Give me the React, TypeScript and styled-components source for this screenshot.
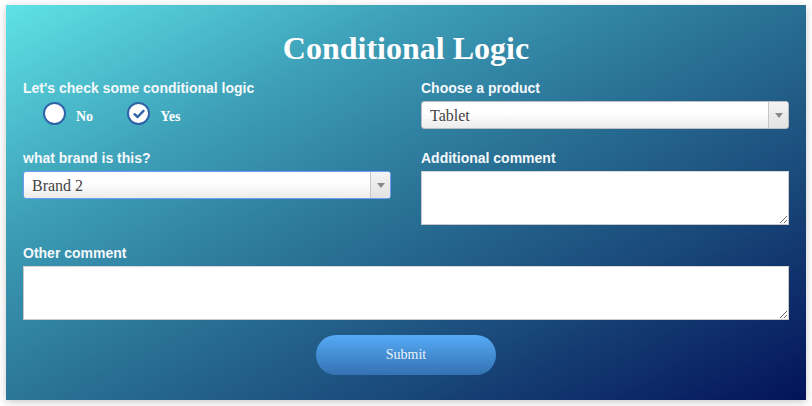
import React from "react";
import styled, { createGlobalStyle } from "styled-components";

const Global = createGlobalStyle`
  html, body { margin: 0; padding: 0; background: #ffffff; }
  body { font-family: "Liberation Sans", Arial, sans-serif; }
  * { box-sizing: border-box; }
`;

const Page = styled.div`
  padding: 5px 6px 6px 6px;
`;

const Panel = styled.form`
  width: 800px;
  height: 395px;
  padding: 23px 17px 0 17px;
  background: linear-gradient(152deg, #5ee2e6 0%, #3c9db6 28%, #2a7296 50%, #1a4a7a 72%, #03125a 100%);
  box-shadow: 0 2px 8px rgba(0, 0, 0, 0.22);
  display: flex;
  flex-direction: column;
`;

const Title = styled.h1`
  margin: 0;
  font-family: "Liberation Serif", "Times New Roman", serif;
  font-weight: bold;
  font-size: 32px;
  line-height: 40px;
  text-align: center;
  color: #ffffff;
`;

const Grid = styled.div`
  display: grid;
  grid-template-columns: 368px 368px;
  column-gap: 30px;
  margin-top: 12px;
`;

const Field = styled.div<{ $span?: boolean; $gap?: number }>`
  display: flex;
  flex-direction: column;
  grid-column: ${(p) => (p.$span ? "1 / span 2" : "auto")};
  margin-bottom: ${(p) => p.$gap ?? 0}px;
`;

const Label = styled.label`
  font-family: "Liberation Sans", Arial, sans-serif;
  font-weight: bold;
  font-size: 14px;
  line-height: 16px;
  color: #f4f8fb;
  margin-bottom: 5px;
`;

const RadioRow = styled.div`
  display: flex;
  align-items: center;
  padding-left: 20px;
  margin-top: 1px;
  gap: 34px;
`;

const RadioItem = styled.span`
  display: flex;
  align-items: center;
  gap: 10px;
  font-family: "Liberation Serif", "Times New Roman", serif;
  font-weight: bold;
  font-size: 14px;
  color: #ffffff;
  padding-top: 6px;
`;

const RadioCircle = styled.span`
  width: 23px;
  height: 23px;
  margin-top: -6px;
  border-radius: 50%;
  border: 2px solid #2f64a8;
  background: #ffffff;
  display: flex;
  align-items: center;
  justify-content: center;
`;

const Select = styled.div<{ $focus?: boolean }>`
  height: 28px;
  display: flex;
  border: 1px solid ${(p) => (p.$focus ? "#6d9cf0" : "#bdbdbd")};
  border-radius: 3px;
  background: linear-gradient(#ffffff 40%, #ececec 100%);
  overflow: hidden;
`;

const SelectText = styled.span`
  flex: 1;
  font-family: "Liberation Serif", "Times New Roman", serif;
  font-size: 16px;
  line-height: 28px;
  color: #444444;
  padding-left: 8px;
`;

const Arrow = styled.span`
  width: 20px;
  border-left: 1px solid #c6c6c6;
  background: linear-gradient(#f4f4f4, #e2e2e2);
  display: flex;
  align-items: center;
  justify-content: center;
  &::after {
    content: "";
    border-left: 4px solid transparent;
    border-right: 4px solid transparent;
    border-top: 5px solid #888888;
  }
`;

const TextArea = styled.textarea`
  height: 54px;
  width: 100%;
  border: 1px solid #c8c8c8;
  border-top-color: #d8d8d8;
  background: #ffffff;
  margin: 0;
  display: block;
  resize: vertical;
`;

const ButtonRow = styled.div`
  display: flex;
  justify-content: center;
  margin-top: 15px;
`;

const Submit = styled.button`
  width: 180px;
  height: 40px;
  border: none;
  border-radius: 20px;
  background: linear-gradient(#55aaf6, #3472b2);
  color: #eaf1fb;
  font-family: "Liberation Serif", "Times New Roman", serif;
  font-size: 14px;
  padding: 0;
`;

export default function App() {
  return (
    <>
      <Global />
      <Page>
        <Panel onSubmit={(e) => e.preventDefault()}>
          <Title>Conditional Logic</Title>
          <Grid>
            <Field $gap={21}>
              <Label>Let's check some conditional logic</Label>
              <RadioRow>
                <RadioItem>
                  <RadioCircle />
                  No
                </RadioItem>
                <RadioItem>
                  <RadioCircle>
                    <svg width="12" height="10" viewBox="0 0 12 10">
                      <path d="M1.5 5.2 L4.6 8 L10.5 1.8" fill="none" stroke="#2f64a8" strokeWidth="2.4" strokeLinecap="round" strokeLinejoin="round" />
                    </svg>
                  </RadioCircle>
                  Yes
                </RadioItem>
              </RadioRow>
            </Field>
            <Field $gap={21}>
              <Label>Choose a product</Label>
              <Select>
                <SelectText>Tablet</SelectText>
                <Arrow />
              </Select>
            </Field>
            <Field $gap={20}>
              <Label>what brand is this?</Label>
              <Select $focus>
                <SelectText>Brand 2</SelectText>
                <Arrow />
              </Select>
            </Field>
            <Field $gap={20}>
              <Label>Additional comment</Label>
              <TextArea />
            </Field>
            <Field $span>
              <Label>Other comment</Label>
              <TextArea />
            </Field>
          </Grid>
          <ButtonRow>
            <Submit type="submit">Submit</Submit>
          </ButtonRow>
        </Panel>
      </Page>
    </>
  );
}
